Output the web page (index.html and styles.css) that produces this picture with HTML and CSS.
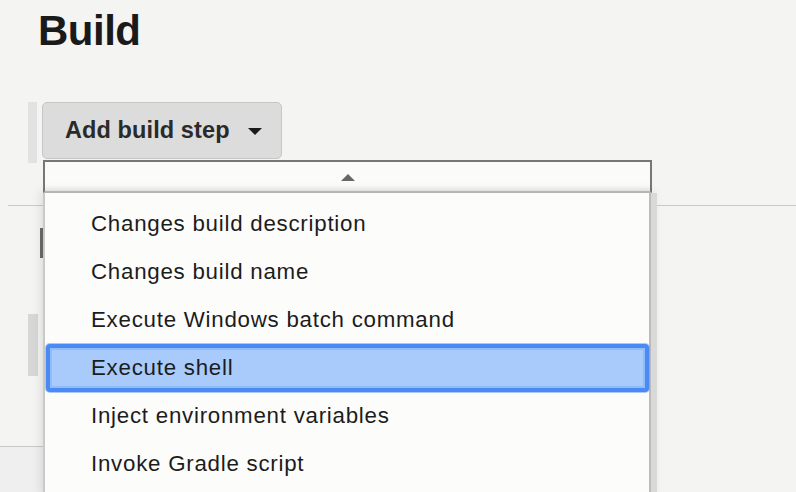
FILE: index.html
```html
<!DOCTYPE html>
<html lang="en">
<head>
<meta charset="utf-8">
<title>Build</title>
<link rel="stylesheet" href="styles.css">
</head>
<body>
<div class="page">
  <h1 class="title">Build</h1>
  <div class="step-row">
    <div class="step-bar"></div>
    <div class="dd-wrap">
      <button class="add-btn" type="button">Add build step<span class="caret"></span></button>
      <div class="menu">
        <div class="menu-head"><span class="up"></span></div>
        <ul class="menu-list">
          <li class="item">Changes build description</li>
          <li class="item">Changes build name</li>
          <li class="item">Execute Windows batch command</li>
          <li class="item item-active">Execute shell</li>
          <li class="item">Inject environment variables</li>
          <li class="item">Invoke Gradle script</li>
        </ul>
      </div>
    </div>
  </div>
  <div class="below">
    <div class="handle"></div>
    <div class="block"></div>
  </div>
  <div class="below-end"></div>
</div>
</body>
</html>
```

FILE: styles.css
```css
html, body {
  margin: 0;
  padding: 0;
  background: #f4f4f3;
  overflow: hidden;
  height: 100%;
}

.page {
  font-family: "Liberation Sans", Arial, sans-serif;
  color: #1e1e1e;
  height: 492px;
  overflow: hidden;
}

.title {
  margin: 0;
  padding: 7px 0 0 38px;
  font-size: 42px;
  line-height: 48px;
  font-weight: 700;
  letter-spacing: -0.5px;
  color: #1a1a1a;
}

.step-row {
  display: flex;
  align-items: flex-start;
  gap: 5px;
  margin-top: 47px;
  padding-left: 28px;
}

.step-bar {
  width: 9px;
  height: 61px;
  background: #e2e2e2;
}

.dd-wrap {
  position: relative;
}

.add-btn {
  display: flex;
  align-items: center;
  box-sizing: border-box;
  height: 57px;
  width: 240px;
  padding: 0 0 0 22px;
  margin: 0;
  background: #dcdcdc;
  border: 1px solid #c6c6c6;
  border-radius: 5px;
  font-family: "Liberation Sans", Arial, sans-serif;
  font-size: 23.5px;
  font-weight: 700;
  letter-spacing: 0.1px;
  color: #2a2a2a;
}

.caret {
  width: 0;
  height: 0;
  margin-left: 18px;
  margin-top: 2px;
  border-left: 7.5px solid transparent;
  border-right: 7.5px solid transparent;
  border-top: 7px solid #1a1a1a;
}

.menu {
  position: absolute;
  top: calc(100% + 1px);
  left: 1px;
  width: 609px;
  z-index: 5;
}

.menu-head {
  box-sizing: border-box;
  height: 33px;
  border: 2px solid #777777;
  border-bottom: 2px solid #c0c0c0;
  background: #fbfbfa;
  box-shadow: inset 0 -5px 4px -3px rgba(0, 0, 0, 0.07);
  display: flex;
  justify-content: center;
  padding-top: 12px;
}

.up {
  width: 0;
  height: 0;
  border-left: 7.5px solid transparent;
  border-right: 7.5px solid transparent;
  border-bottom: 7px solid #676767;
}

.menu-list {
  list-style: none;
  margin: 0;
  padding: 7px 0 4px 0;
  background: #fcfcfb;
  border-left: 2px solid #c9c9c9;
  border-right: 2px solid #bdbdbd;
  width: 608px;
  box-sizing: border-box;
  box-shadow: 6px 0 0 #d9d9d9, 0 0 9px 3px rgba(0, 0, 0, 0.09);
}

.item {
  box-sizing: border-box;
  height: 48px;
  line-height: 40px;
  margin-left: 1px;
  padding-left: 41px;
  border: 4px solid transparent;
  border-radius: 4px;
  font-size: 22.3px;
  letter-spacing: 0.75px;
  color: #1c1c1c;
  white-space: nowrap;
}

.item-active {
  background: #a8cbfb;
  border-color: #4a8af4;
  box-shadow: inset 0 0 0 2px #92bcf9, 0 0 0 1px rgba(74, 138, 244, 0.45);
}

.below {
  margin: 42px 0 0 8px;
  border-top: 1px solid #cacaca;
  height: 240px;
}

.handle {
  width: 3px;
  height: 30px;
  margin: 22px 0 0 32px;
  background: #6b6b6b;
}

.block {
  width: 10px;
  height: 62px;
  margin: 56px 0 0 20px;
  background: #d7d7d7;
}

.below-end {
  width: 43px;
  height: 45px;
  border-top: 1px solid #c8c8c8;
  background: #efefef;
}
```
